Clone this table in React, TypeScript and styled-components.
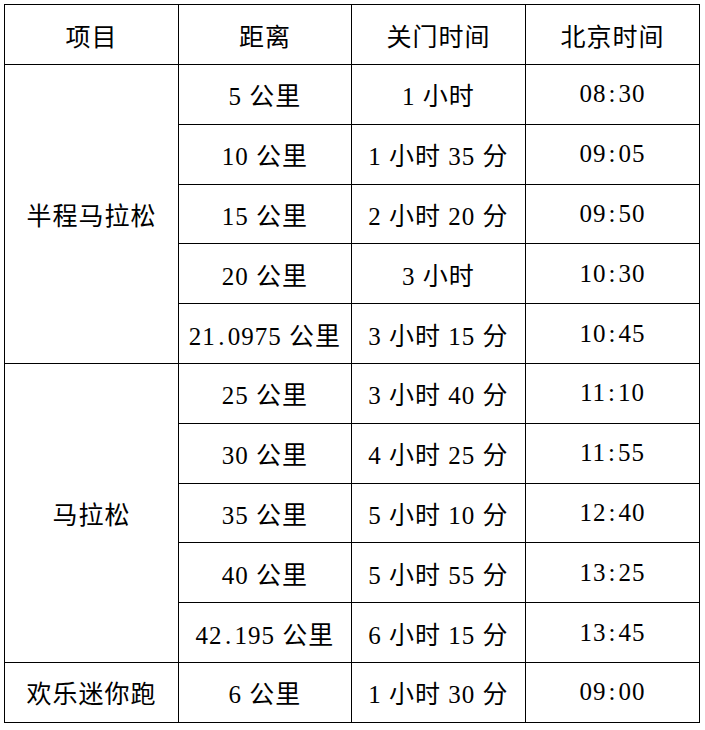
import React from 'react';
import styled, { createGlobalStyle } from 'styled-components';

type Row = { group?: string; span?: number; dist: string; close: string; time: string };

const rows: Row[] = [
   { group: '半程马拉松', span: 5, dist: '5 公里', close: '1 小时', time: '08:30' },
   { dist: '10 公里', close: '1 小时 35 分', time: '09:05' },
   { dist: '15 公里', close: '2 小时 20 分', time: '09:50' },
   { dist: '20 公里', close: '3 小时', time: '10:30' },
   { dist: '21.0975 公里', close: '3 小时 15 分', time: '10:45' },
   { group: '马拉松', span: 5, dist: '25 公里', close: '3 小时 40 分', time: '11:10' },
   { dist: '30 公里', close: '4 小时 25 分', time: '11:55' },
   { dist: '35 公里', close: '5 小时 10 分', time: '12:40' },
   { dist: '40 公里', close: '5 小时 55 分', time: '13:25' },
   { dist: '42.195 公里', close: '6 小时 15 分', time: '13:45' },
   { group: '欢乐迷你跑', span: 1, dist: '6 公里', close: '1 小时 30 分', time: '09:00' },
];

// '.' and ':' take a half-width cell in the source font
const Txt = ({ value }: { value: string }) => (
   <>
      {value.split(/([.:])/).map((part, i) =>
         part === '.' || part === ':' ? <Punct key={i}>{part}</Punct> : part
      )}
   </>
);

const App = () => {
   return (
      <>
         <GlobalStyle />
         <Table>
            <colgroup>
               <col style={{ width: 174 }} />
               <col style={{ width: 173 }} />
               <col style={{ width: 174 }} />
               <col style={{ width: 174 }} />
            </colgroup>
            <thead>
               <HeadRow>
                  <Cell as="th">项目</Cell>
                  <Cell as="th">距离</Cell>
                  <Cell as="th">关门时间</Cell>
                  <Cell as="th">北京时间</Cell>
               </HeadRow>
            </thead>
            <tbody>
               {rows.map((r, i) => (
                  <BodyRow key={i}>
                     {r.group && <Cell rowSpan={r.span}>{r.group}</Cell>}
                     <Cell><Txt value={r.dist} /></Cell>
                     <Cell><Txt value={r.close} /></Cell>
                     <Cell><Txt value={r.time} /></Cell>
                  </BodyRow>
               ))}
            </tbody>
         </Table>
      </>
   );
};

export default App;

const GlobalStyle = createGlobalStyle`
   body {
      margin: 0;
      background: #fff;
   }
`;
const Table = styled.table`
   margin: 4px 0 0 4px;
   border-collapse: collapse;
   table-layout: fixed;
   width: 696px;
   font-family: 'Liberation Serif', 'Noto Sans CJK SC', serif;
   font-size: 25px;
   color: #000;
`;
const HeadRow = styled.tr`
   height: 60px;
`;
const BodyRow = styled.tr`
   height: 59.8px;
`;
const Cell = styled.td`
   border: 1px solid #000;
   padding: 0;
   text-align: center;
   vertical-align: middle;
   font-weight: 400;
   letter-spacing: 1px;
   white-space: nowrap;
`;
const Punct = styled.span`
   display: inline-block;
   width: 12px;
   text-align: center;
`;
